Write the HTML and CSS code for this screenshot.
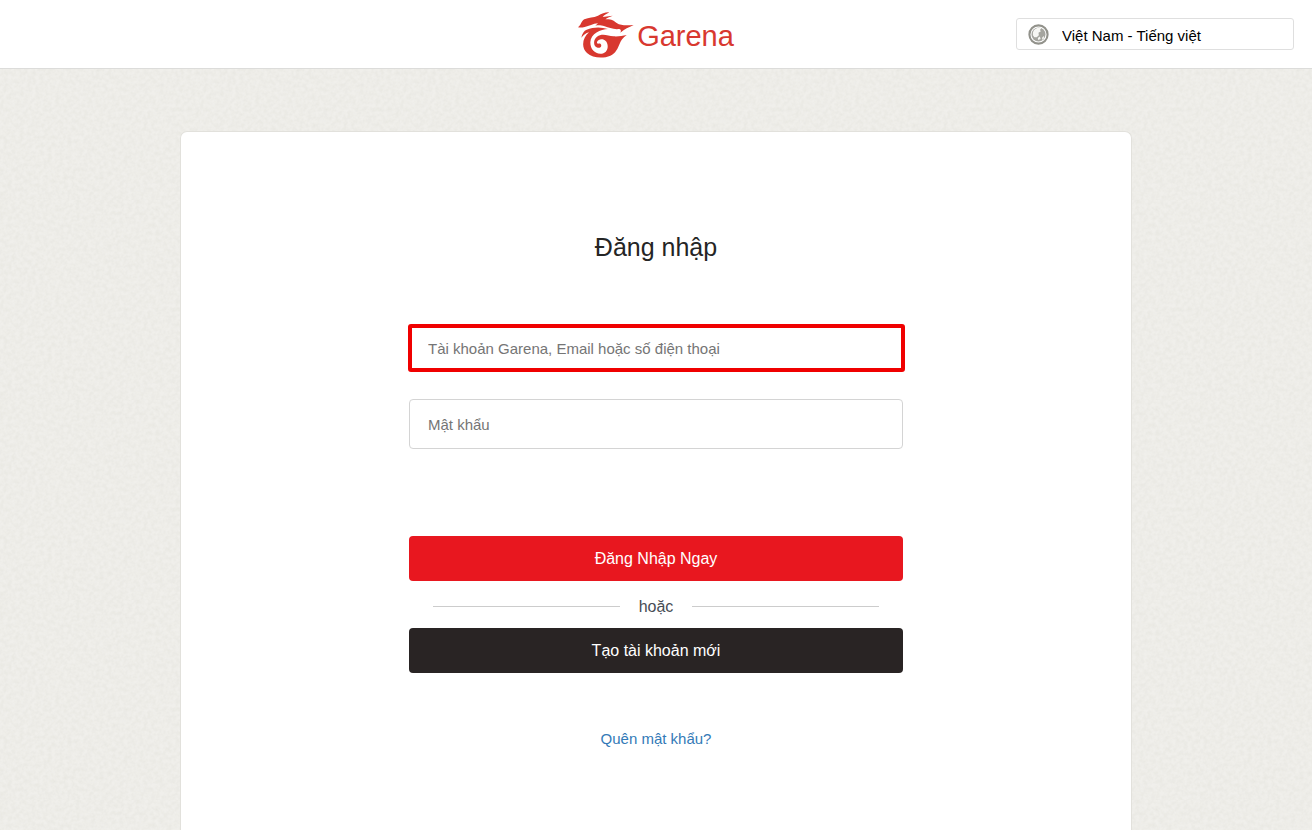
FILE: index.html
```html
<!DOCTYPE html>
<html lang="vi">
<head>
<meta charset="utf-8">
<meta name="viewport" content="width=device-width, initial-scale=1">
<title>Đăng nhập</title>
<link rel="stylesheet" href="styles.css">
</head>
<body>
<header class="header">
  <a class="brand" href="#">
    <svg class="brand-mark" viewBox="24 24 168 138" aria-hidden="true">
      <path d="M24 70C34 63 33 51 43 46C57 39 70 42 84 35C96 29 106 24 118 25C109 30 103 33 98 39L128 35C118 39 110 42 106 46C124 45 131 50 140 57C153 66 174 64 191 63C176 70 164 75 151 86C154 81 153 76 148 75C130 77 117 71 104 67C92 63 84 63 76 65L84 58C68 59 58 67 44 69C36 71 30 71 24 70Z"/>
      <path d="M50 77C70 69 92 68 114 75C92 76 62 88 61 115C61 136 74 149 91 149C106 149 114 138 113 125C112 112 103 105 93 106C85 107 80 112 81 117C83 121 88 117 92 120C97 125 91 133 83 131C69 128 69 107 81 98C96 86 114 95 130 97C144 98 157 96 170 93C159 101 153 109 150 117C143 134 137 148 121 155C99 165 67 162 51 147C32 129 38 101 57 85C47 87 41 93 34 101C36 89 42 80 50 77Z"/>
    </svg>
    <span class="brand-name">Garena</span>
  </a>
  <div class="language">
    <svg class="globe" viewBox="0 0 60 60" aria-hidden="true">
      <circle class="globe-ring" cx="30" cy="30" r="26"/>
      <circle class="globe-sea" cx="30" cy="30" r="20"/>
      <path class="globe-land" d="M14 24C17 13 29 9 38 12L34 17L37 21L30 25L31 32L25 38L18 38L14 32ZM28 40L34 36L36 43L29 46ZM41 38L46 34L45 42L40 45Z"/>
    </svg>
    <select class="language-select" aria-label="Ngôn ngữ"><option>Việt Nam - Tiếng việt</option></select>
  </div>
</header>
<main class="page">
  <section class="card">
    <form class="form">
      <h1 class="title">Đăng nhập</h1>
      <input class="field field-marked" type="text" aria-label="Tài khoản" placeholder="Tài khoản Garena, Email hoặc số điện thoại">
      <input class="field" type="password" aria-label="Mật khẩu" placeholder="Mật khẩu">
      <button class="button button-login" type="submit">Đăng Nhập Ngay</button>
      <div class="divider">hoặc</div>
      <button class="button button-create" type="button">Tạo tài khoản mới</button>
      <a class="forgot" href="#">Quên mật khẩu?</a>
    </form>
  </section>
</main>
</body>
</html>
```
FILE: styles.css
```css
* { box-sizing: border-box; }

body {
  margin: 0;
  min-height: 100vh;
  display: flex;
  flex-direction: column;
  font-family: "Liberation Sans", Arial, sans-serif;
  font-size: 16px;
  color: #252525;
  background-color: #f0efeb;
  background-image: url("data:image/svg+xml,%3Csvg xmlns='http://www.w3.org/2000/svg' width='200' height='200'%3E%3Cfilter id='n'%3E%3CfeTurbulence type='fractalNoise' baseFrequency='0.25' numOctaves='2' stitchTiles='stitch'/%3E%3CfeColorMatrix values='0 0 0 0 0.5 0 0 0 0 0.5 0 0 0 0 0.42 0.24 0 0 0 -0.07'/%3E%3C/filter%3E%3Crect width='200' height='200' filter='url(%23n)'/%3E%3C/svg%3E");
}

.header {
  display: grid;
  grid-template-columns: 1fr auto 1fr;
  align-items: center;
  padding: 12px 18px 10px;
  background: #fff;
  border-bottom: 1px solid #dcdcda;
}

.brand {
  grid-column: 2;
  display: flex;
  align-items: center;
  gap: 3px;
  color: #d8382f;
  text-decoration: none;
}

.brand-mark {
  width: 56px;
  height: 46px;
  fill: currentColor;
}

.brand-name {
  padding-top: 2px;
  font-size: 29px;
  line-height: 32px;
}

.language {
  justify-self: end;
  display: flex;
  align-items: center;
  gap: 13px;
  width: 278px;
  height: 32px;
  margin-bottom: 2px;
  padding-left: 11px;
  border: 1px solid #dfdfdf;
  border-radius: 3px;
}

.globe {
  flex: none;
  width: 21px;
  height: 21px;
}

.globe-ring { fill: #fff; stroke: #92928b; stroke-width: 6; }
.globe-sea { fill: #a5a59f; }
.globe-land { fill: #f7f7f4; }

.language-select {
  flex: 1;
  height: 30px;
  padding: 3px 0 0;
  border: 0;
  appearance: none;
  background: transparent;
  font-family: inherit;
  font-size: 15px;
  color: #000;
}

.page {
  flex: 1;
  display: flex;
  justify-content: center;
  padding: 62px 20px 0;
}

.card {
  width: 100%;
  max-width: 952px;
  padding: 97px 20px 80px;
  background: #fff;
  border: 1px solid #e2e1dc;
  border-bottom: 0;
  border-radius: 7px 7px 0 0;
}

.form {
  display: flex;
  flex-direction: column;
  width: 100%;
  max-width: 494px;
  margin: 0 auto;
}

.title {
  margin: 0 0 59px;
  font-size: 25px;
  line-height: 36px;
  font-weight: 400;
  text-align: center;
}

.field {
  height: 50px;
  padding: 0 18px;
  border: 1px solid #d4d4d4;
  border-radius: 4px;
  background: #fff;
  font-family: inherit;
  font-size: 15px;
  color: #252525;
}

.field::placeholder { color: #757575; }

.field-marked {
  height: 48px;
  margin: 0 -2px 27px -1px;
  padding: 0 16px;
  border: 4px solid #f00000;
  border-radius: 3px;
}

.button {
  height: 45px;
  padding: 1px 0 0;
  border: 0;
  border-radius: 4px;
  font-family: inherit;
  font-size: 16px;
  color: #fff;
}

.button-login {
  margin-top: 87px;
  background: #e8171f;
}

.button-create { background: #292424; }

.divider {
  display: flex;
  align-items: center;
  gap: 19px;
  height: 47px;
  padding: 4px 24px 0;
  color: #474c55;
}

.divider::before,
.divider::after {
  content: "";
  flex: 1;
  height: 1px;
  background: #ccc;
}

.forgot {
  align-self: center;
  margin-top: 56px;
  font-size: 15px;
  line-height: 20px;
  color: #337ab7;
  text-decoration: none;
}
```
